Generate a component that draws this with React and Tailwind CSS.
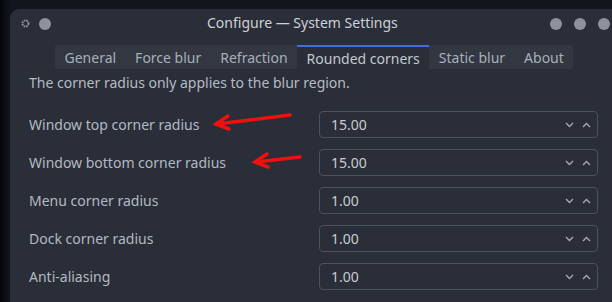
import React from 'react';

const tabs = ['General', 'Force blur', 'Refraction', 'Rounded corners', 'Static blur', 'About'];

const rows = [
  { label: 'Window top corner radius', value: '15.00' },
  { label: 'Window bottom corner radius', value: '15.00' },
  { label: 'Menu corner radius', value: '1.00' },
  { label: 'Dock corner radius', value: '1.00' },
  { label: 'Anti-aliasing', value: '1.00' },
];

function Chevron({ up }) {
  return (
    <svg width="9" height="6" viewBox="0 0 9 6" className="text-[#a3a9b3]">
      <path
        d={up ? 'M1 5 L4.5 1.5 L8 5' : 'M1 1 L4.5 4.5 L8 1'}
        fill="none"
        stroke="currentColor"
        strokeWidth="1.4"
      />
    </svg>
  );
}

function SpinBox({ value }) {
  return (
    <div className="w-[279px] h-[27px] rounded-[4px] border border-[#4b515d] flex items-center pl-[11px] pr-[6px]">
      <span className="flex-1 text-[14px] text-[#c7ccd4]">{value}</span>
      <div className="flex items-center gap-[8px]">
        <Chevron />
        <Chevron up />
      </div>
    </div>
  );
}

function Gear() {
  return (
    <svg width="9" height="9" viewBox="0 0 9 9">
      <circle cx="4.5" cy="4.5" r="3" fill="none" stroke="#8c919b" strokeWidth="2" strokeDasharray="1.6 0.8" />
      <circle cx="4.5" cy="4.5" r="1.3" fill="#2a2e38" />
    </svg>
  );
}

export default function App() {
  return (
    <div
      className="relative w-[612px] h-[302px] overflow-hidden bg-[linear-gradient(90deg,#05070a,#12151b_10px)] pt-[9px] pl-[10px]"
      style={{ fontFamily: '"Noto Sans", "DejaVu Sans", sans-serif' }}
    >
      <div className="w-[610px] h-[300px] rounded-tl-[9px] bg-[#2a2e38] flex flex-col">
        {/* Title bar */}
        <div className="h-[29px] flex items-center pl-[11px] pr-[10px] shrink-0">
          <Gear />
          <div className="ml-[9px] w-[12px] h-[12px] rounded-full bg-[#8d929c]" />
          <div className="ml-[156px] mb-[2px] text-[14px] text-[#cdd1d8]">Configure — System Settings</div>
          <div className="ml-auto flex gap-[12px]">
            <div className="w-[12px] h-[12px] rounded-full bg-[#8d929c]" />
            <div className="w-[12px] h-[12px] rounded-full bg-[#8d929c]" />
            <div className="w-[12px] h-[12px] rounded-full bg-[#8d929c]" />
          </div>
        </div>

        {/* Tabs */}
        <div className="mt-[7px] ml-[45px] self-start h-[24px] bg-[#323741] rounded-[2px] flex shrink-0">
          {tabs.map((t) => (
            <div
              key={t}
              className={
                t === 'Rounded corners'
                  ? 'px-[9.5px] h-full flex items-center text-[14px] text-[#c3c8d0] bg-[#2a2e38] border-t-2 border-[#3f6fd9]'
                  : 'px-[9.5px] h-full flex items-center text-[14px] text-[#a7b0bd]'
              }
            >
              {t}
            </div>
          ))}
        </div>

        {/* Content */}
        <div className="pl-[19px] pt-[5px]">
          <p className="text-[14px] text-[#b5bbc5] leading-[18px]">
            The corner radius only applies to the blur region.
          </p>
          <div className="mt-[19px] flex flex-col gap-[11px]">
            {rows.map((r) => (
              <div key={r.label} className="flex items-center">
                <span className="w-[290px] text-[14px] text-[#b2b9c4]">{r.label}</span>
                <SpinBox value={r.value} />
              </div>
            ))}
          </div>
        </div>
      </div>

      {/* Red annotation arrows */}
      <svg className="absolute left-0 top-0 pointer-events-none" width="612" height="302">
        <g stroke="#f01010" strokeWidth="3.5" strokeLinecap="round" fill="none">
          <path d="M290 115 L217 124" />
          <path d="M228 116 L216 124 L229 129" />
          <path d="M300 157 L256 162" />
          <path d="M267 154 L255 162 L268 167" />
        </g>
      </svg>
    </div>
  );
}
